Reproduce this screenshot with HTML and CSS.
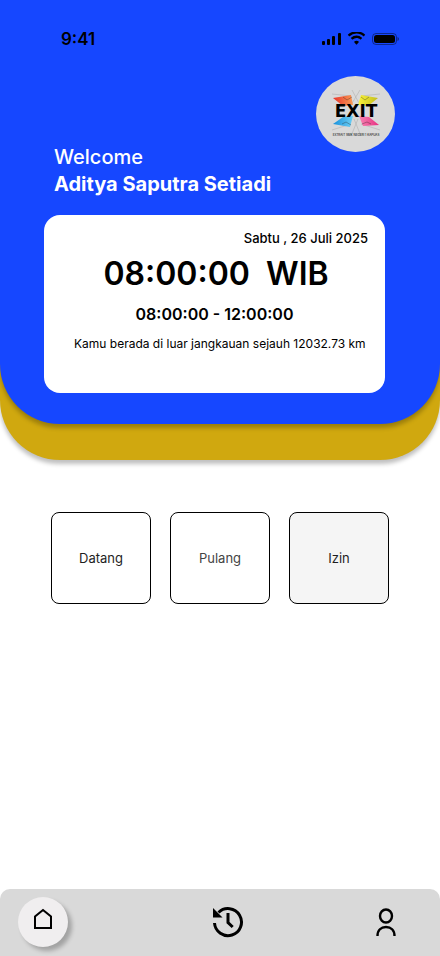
FILE: index.html
```html
<!DOCTYPE html>
<html lang="id">
<head>
<meta charset="utf-8">
<meta name="viewport" content="width=device-width, initial-scale=1">
<title>Presensi</title>
<link rel="stylesheet" href="styles.css">
</head>
<body>
<div class="backdrop">
  <header class="header">
    <div class="status">
      <span class="status-time">9:41</span>
      <svg class="status-icons" width="78" height="14" viewBox="0 0 78 14" aria-hidden="true">
        <rect x="1" y="9" width="3" height="4" rx="1"/>
        <rect x="6" y="7" width="3" height="6" rx="1"/>
        <rect x="11" y="4" width="3" height="9" rx="1"/>
        <rect x="17" y="1" width="3" height="12" rx="1"/>
        <path transform="translate(1 0)" d="M34.500 1.600c2.600 0 5 .9 6.900 2.700.1.100.3.100.5 0l1.100-1.200c.1-.1.100-.4 0-.5a12.400 12.400 0 0 0-17 0c-.1.100-.1.400 0 .5l1.100 1.200c.2.100.4.100.5 0a10 10 0 0 1 6.900-2.700zm0 4.400c1.400 0 2.800.5 3.800 1.500.2.100.4.100.5 0l1.200-1.300c.1-.1.100-.3 0-.5a8 8 0 0 0-11 0c-.1.200-.1.400 0 .5l1.200 1.300c.1.100.3.100.5 0a5.600 5.600 0 0 1 3.800-1.500zm2.400 3.700c.1.100.1.300 0 .4l-2.100 2.300c-.2.200-.4.200-.6 0l-2.100-2.300c-.1-.1-.1-.3 0-.4a3.700 3.700 0 0 1 4.800 0z"/>
        <rect x="51.500" y="1.500" width="24" height="11" rx="3.500" fill="none" stroke="#000" stroke-opacity=".45"/>
        <rect x="53" y="3" width="21" height="8" rx="2.500"/>
        <path d="M76.500 5v4c.8-.3 1.400-1.100 1.400-2s-.6-1.700-1.400-2z" opacity=".5"/>
      </svg>
    </div>
    <div class="profile">
      <div class="greeting">
        <p class="welcome">Welcome</p>
        <h1 class="name">Aditya Saputra Setiadi</h1>
      </div>
      <svg class="logo" width="79" height="76" viewBox="0 0 79 76" role="img" aria-label="EXIT">
        <defs>
          <linearGradient id="red"><stop offset="0" stop-color="#e9342b"/><stop offset="1" stop-color="#f99a55"/></linearGradient>
          <linearGradient id="yellow"><stop offset="0" stop-color="#fbf43a"/><stop offset="1" stop-color="#c3bd1d"/></linearGradient>
          <linearGradient id="blue"><stop offset="0" stop-color="#1690dc"/><stop offset="1" stop-color="#6fd0f5"/></linearGradient>
          <linearGradient id="pink"><stop offset="0" stop-color="#f883b4"/><stop offset="1" stop-color="#e62f80"/></linearGradient>
        </defs>
        <ellipse cx="39.500" cy="38" rx="39.500" ry="38" fill="#d9d9d9"/>
        <g fill="none" stroke="#b0b0b0" stroke-width=".6">
          <path d="M36 14l8 15M44 14l-9 15M35 60l7-17M45 60l-7-17M16 18l19 2M64 18l-19 2M16 54l19-6M64 54l-19-6"/>
        </g>
        <path d="M17 22l18-3 2 10-10 1z" fill="url(#red)"/>
        <path d="M62 22l-17-3-3 10 10 1z" fill="url(#yellow)"/>
        <path d="M17 48l10-7 10-1-3 11z" fill="url(#blue)"/>
        <path d="M63 49l-10-8-10-1 4 10z" fill="url(#pink)"/>
        <path d="M27 21l4 3 5-3M53 21l-4 3-4-3M26 48l4-2 5 3M55 48l-4-2-5 2" fill="none" stroke="#222" stroke-opacity=".5" stroke-width=".7"/>
        <text class="logo-word" x="40" y="41" text-anchor="middle">EXIT</text>
        <text class="logo-caption" x="40" y="60" text-anchor="middle">EXTRAIT SMK NEGERI 1 KAPUAS</text>
      </svg>
    </div>
    <section class="card">
      <p class="date">Sabtu , 26 Juli 2025</p>
      <p class="clock">08:00:00&nbsp; WIB</p>
      <p class="hours">08:00:00 - 12:00:00</p>
      <p class="distance">Kamu berada di luar jangkauan sejauh 12032.73 km</p>
    </section>
  </header>
</div>
<main class="actions">
  <button class="action" type="button">Datang</button>
  <button class="action action-out" type="button">Pulang</button>
  <button class="action action-leave" type="button">Izin</button>
</main>
<nav class="nav">
  <a class="tab tab-active" href="#home" aria-label="Beranda">
    <svg width="20" height="22" viewBox="0 0 20 22"><path d="M2 20V8.500L10 2l8 6.500V20z" fill="none" stroke="#000" stroke-width="2"/></svg>
  </a>
  <a class="tab" href="#history" aria-label="Riwayat">
    <svg width="32" height="32" viewBox="0 0 32 32"><path d="M2.500 17a13.500 13.500 0 1 0 4-10.500" fill="none" stroke="#000" stroke-width="3"/><path d="M1 2v9.500h9.500z"/><path d="M16 7v9.500l4.700 4.500" fill="none" stroke="#000" stroke-width="3"/></svg>
  </a>
  <a class="tab" href="#profile" aria-label="Profil">
    <svg width="20" height="28" viewBox="0 0 20 28"><ellipse cx="10" cy="8" rx="6" ry="6.500" fill="none" stroke="#000" stroke-width="2.400"/><path d="M1.500 28C1.500 22 5 19 10 19s8.500 3 8.500 9" fill="none" stroke="#000" stroke-width="2.400"/></svg>
  </a>
</nav>
</body>
</html>
```
FILE: styles.css
```css
* { box-sizing: border-box; }
body {
  margin: 0;
  min-height: 100vh;
  display: flex;
  flex-direction: column;
  background: #fff;
  color: #000;
  font-family: Inter, sans-serif;
}
p, h1 { margin: 0; }

.backdrop {
  padding-bottom: 36px;
  background: #d0a80f;
  border-radius: 0 0 60px 60px;
  box-shadow: 0 4px 4px rgba(0, 0, 0, .25);
}
.header {
  padding: 2px 55px 31px 44px;
  background: #1647ff;
  border-radius: 0 0 60px 60px;
  box-shadow: 0 4px 4px rgba(0, 0, 0, .25);
}
.status {
  display: flex;
  justify-content: space-between;
  align-items: center;
  height: 74px;
  padding-left: 17px;
  margin-right: -14px;
}
.status-time { font-size: 17px; line-height: 22px; font-weight: 600; }
.profile {
  display: flex;
  justify-content: space-between;
  align-items: flex-start;
  margin-right: -10px;
}
.greeting {
  padding: 68px 0 17px 10px;
  color: #fff;
  font-size: 20px;
  line-height: 27px;
}
.welcome { font-weight: 500; }
.name { font-size: 20px; font-weight: 700; }
.logo { flex: none; }
.logo-word { font: bold 17px "DejaVu Sans", sans-serif; }
.logo-caption { font: 3px Inter, sans-serif; }

.card {
  padding: 14px 17px 32px;
  background: #fff;
  border-radius: 16px;
  text-align: center;
}
.date { font-size: 13px; line-height: 18px; font-weight: 500; text-align: right; }
.clock { padding-left: 3px; font-size: 32px; line-height: 54px; font-weight: 600; }
.hours { font-size: 16px; line-height: 26px; font-weight: 600; }
.distance { padding-left: 13px; font-size: 12px; line-height: 34px; text-align: left; }

.actions {
  flex: 1;
  display: grid;
  grid-template-columns: repeat(3, 1fr);
  align-items: start;
  gap: 19px;
  padding: 52px 51px;
}
.action {
  height: 92px;
  padding: 0;
  border: 1px solid #000;
  border-radius: 8px;
  background: #fff;
  color: #1e1e1e;
  font: 13px Inter, sans-serif;
}
.action-out { color: #444; }
.action-leave { background: #f5f5f5; }

.nav {
  display: flex;
  justify-content: space-between;
  align-items: center;
  padding: 8px 29px 9px 18px;
  background: #d9d9d9;
  border-radius: 10px 10px 0 0;
}
.tab {
  display: flex;
  justify-content: center;
  align-items: center;
  width: 50px;
  height: 50px;
}
.tab-active {
  margin-right: 26px;
  padding-bottom: 6px;
  border-radius: 50%;
  background: #f0eeef;
  box-shadow: 4px 4px 4px rgba(0, 0, 0, .25);
}
```
